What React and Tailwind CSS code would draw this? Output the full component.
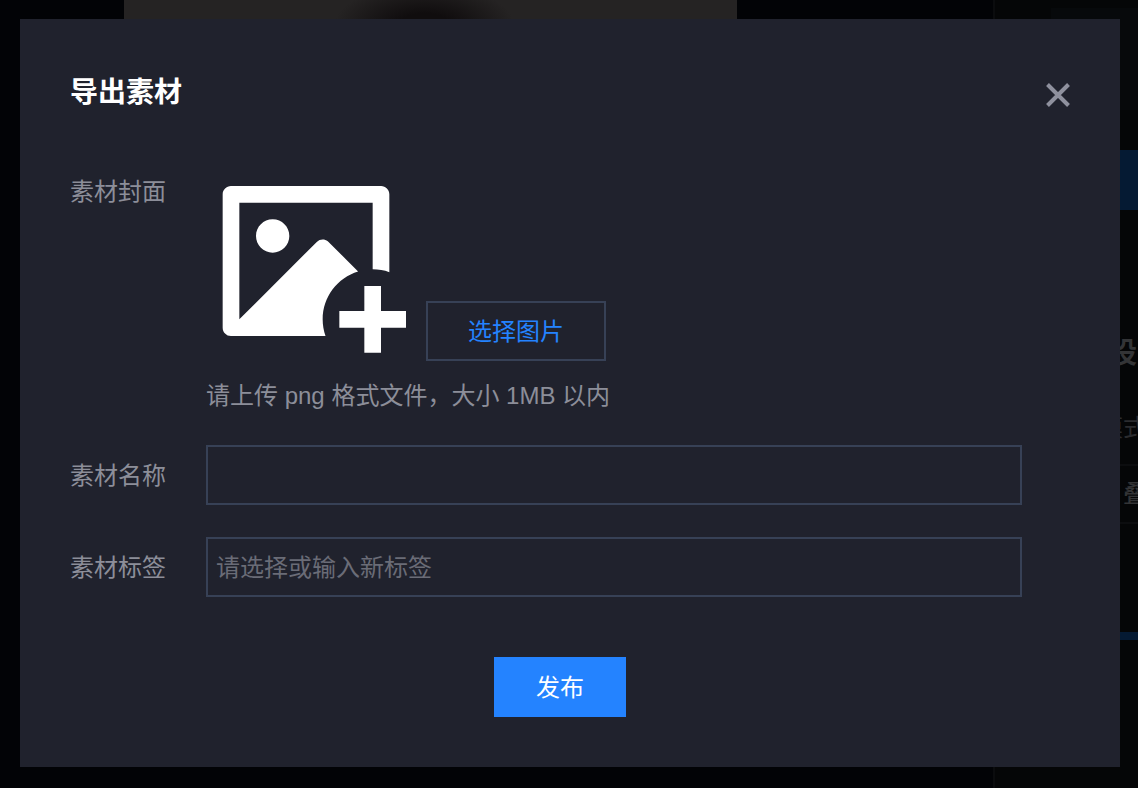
import { useState } from 'react';
import { RiImageAddFill } from 'react-icons/ri';

// Dimmed editor that stays behind the dialog
function Editor() {
  return (
    <div className="flex min-h-screen overflow-hidden bg-[#020306]" aria-hidden="true">
      <div className="flex flex-1 items-start pr-64 pl-[124px]">
        <div className="h-12 flex-1 bg-[#252323] bg-[radial-gradient(ellipse_90px_42px_at_49%_26px,#100d0e_30%,#252323_100%)]" />
      </div>

      <div className="w-[145px] shrink-0 overflow-hidden border-l-2 border-[#0b0c0e] bg-[#050607]">
        <div className="h-[110px] pt-2 pl-14">
          <div className="h-full bg-[#07090b]" />
        </div>
        <div className="mt-10 h-[60px] bg-[#051a33]" />
        <div className="mt-20 border-b-2 border-[#0c0d0f] pt-10 whitespace-nowrap">
          <p className="pl-[114px] text-[28px] leading-[48px] font-bold text-[#333436]">设</p>
          <p className="mt-8 mb-[18px] pl-[104px] text-2xl leading-9 text-[#2b2c2f]">模式</p>
        </div>
        <div className="border-b-2 border-[#0c0d0f] py-2.5 pl-32">
          <p className="text-2xl leading-9 font-medium text-[#333436]">叠</p>
        </div>
        <div className="mt-[108px] h-2 bg-[#051a33]" />
      </div>
    </div>
  );
}

export default function App() {
  const [name, setName] = useState('');
  const [tag, setTag] = useState('');

  const inputClass =
    'h-[60px] min-w-0 flex-1 border-2 border-[#374156] bg-transparent px-2 pt-0.5 text-2xl text-[#c8cad2] outline-none placeholder:text-[#6a6c77]';
  const labelClass = 'w-[136px] shrink-0 pt-0.5 text-2xl leading-[58px] text-[#8c8e99]';

  return (
    <div className="relative font-['Liberation_Sans','Noto_Sans_CJK_SC',sans-serif]">
      <Editor />

      <div className="absolute inset-x-0 top-0 pt-[19px] pr-[18px] pl-5">
        <form
          role="dialog"
          aria-labelledby="dialog-title"
          onSubmit={(e) => e.preventDefault()}
          className="bg-[#20222d] p-[50px]"
        >
          <div className="flex items-start justify-between">
            <h1 id="dialog-title" className="text-[28px] leading-[48px] font-bold text-white">
              导出素材
            </h1>
            <button type="button" aria-label="关闭" className="flex h-[52px] items-center text-[#8f919e]">
              <svg className="size-6" viewBox="0 0 24 24" fill="none" stroke="currentColor" strokeWidth="4">
                <path d="M1.5 1.5 22.5 22.5M22.5 1.5 1.5 22.5" />
              </svg>
            </button>
          </div>

          {/* Cover */}
          <div className="mt-10 flex items-start">
            <span className={labelClass}>素材封面</span>
            <div>
              <div className="flex items-end gap-5">
                <RiImageAddFill className="size-[200px] text-white" />
                <button
                  type="button"
                  className="h-[60px] w-[180px] border-2 border-[#374156] pt-0.5 text-2xl text-[#2483ff]"
                >
                  选择图片
                </button>
              </div>
              <p className="mt-4 pt-0.5 text-2xl leading-[34px] text-[#8c8e99]">请上传 png 格式文件，大小 1MB 以内</p>
            </div>
          </div>

          <div className="mt-8 flex items-center pr-12">
            <label htmlFor="name" className={labelClass}>素材名称</label>
            <input
              id="name"
              type="text"
              value={name}
              onChange={(e) => setName(e.target.value)}
              className={inputClass}
            />
          </div>

          <div className="mt-8 flex items-center pr-12">
            <label htmlFor="tag" className={labelClass}>素材标签</label>
            <input
              id="tag"
              type="text"
              value={tag}
              onChange={(e) => setTag(e.target.value)}
              placeholder="请选择或输入新标签"
              className={inputClass}
            />
          </div>

          <div className="mt-[60px] flex justify-center pr-5">
            <button type="submit" className="h-[60px] w-[132px] bg-[#2483ff] pt-0.5 text-2xl text-white">
              发布
            </button>
          </div>
        </form>
      </div>
    </div>
  );
}
